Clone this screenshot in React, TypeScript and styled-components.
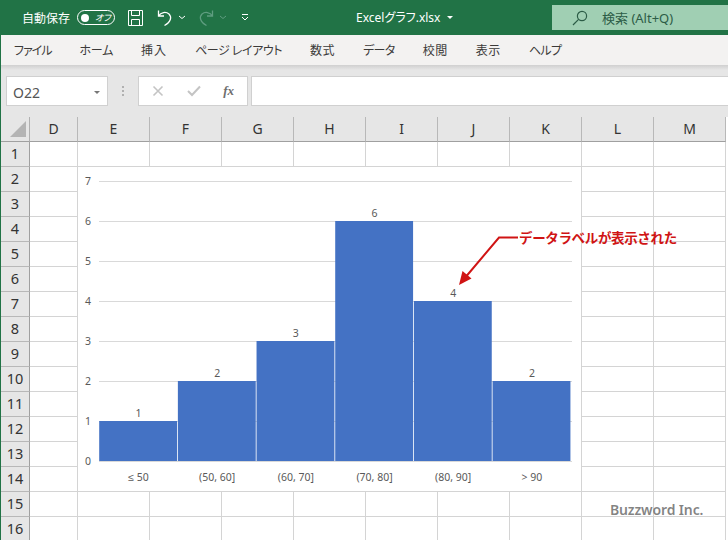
import React from "react";
import styled, { createGlobalStyle } from "styled-components";

const GlobalStyle = createGlobalStyle`
    html, body {
        margin: 0;
        padding: 0;
        background: #ffffff;
    }
`;

const uiFont = `"Noto Sans", "Noto Sans CJK JP", sans-serif`;

const Page = styled.div`
    width: 728px;
    height: 540px;
    overflow: hidden;
    box-sizing: border-box;
    border-left: 1px solid #217346;
    display: flex;
    flex-direction: column;
    font-family: ${uiFont};
    font-feature-settings: "palt";
    background: #e6e6e6;
`;

const TitleBar = styled.div`
    height: 35px;
    flex: none;
    margin-left: -1px;
    background: #217346;
    color: #ffffff;
    display: flex;
    align-items: center;
    font-size: 12px;
    position: relative;
`;

const AutoSave = styled.span`
    margin-left: 22px;
    width: 55px;
    letter-spacing: 0;
`;

const Toggle = styled.div`
    width: 38px;
    height: 15px;
    box-sizing: border-box;
    border: 1px solid #ffffff;
    border-radius: 8px;
    display: flex;
    align-items: center;
    padding-left: 3px;
    font-size: 9px;
    font-style: italic;
    gap: 6px;
    margin-right: 12px;
`;

const ToggleDot = styled.i`
    width: 8px;
    height: 8px;
    border-radius: 50%;
    background: #ffffff;
`;

const QuickIcon = styled.svg<{ $gap?: number }>`
    flex: none;
    margin-right: ${(p) => p.$gap ?? 0}px;
`;

const FileName = styled.div`
    position: absolute;
    left: 356px;
    top: 9px;
    display: flex;
    align-items: center;
    gap: 7px;
    line-height: 17px;
`;

const Caret = styled.i<{ $color: string }>`
    width: 0;
    height: 0;
    border-left: 3px solid transparent;
    border-right: 3px solid transparent;
    border-top: 3px solid ${(p) => p.$color};
`;

const SearchBox = styled.div`
    position: absolute;
    left: 552px;
    top: 5px;
    width: 176px;
    height: 25px;
    background: #a0cfb3;
    color: #2c5c46;
    display: flex;
    align-items: center;
    padding-left: 20px;
    box-sizing: border-box;
    gap: 14px;
    font-size: 13px;
`;

const RibbonTabs = styled.div`
    height: 30px;
    flex: none;
    background: #f3f2f1;
    display: flex;
    align-items: center;
    gap: 28px;
    padding-left: 13px;
    font-size: 12px;
    color: #3b3a39;
`;

const RibbonTab = styled.span<{ $spacing: number }>`
    letter-spacing: ${(p) => p.$spacing}px;
`;

const RibbonShadow = styled.div`
    height: 5px;
    flex: none;
    background: linear-gradient(#d0d0d0, #e6e6e6);
`;

const FormulaBar = styled.div`
    height: 47px;
    flex: none;
    box-sizing: border-box;
    padding: 6px 0 11px 5px;
    display: flex;
    align-items: stretch;
`;

const FieldBox = styled.div`
    background: #ffffff;
    border: 1px solid #d0d0d0;
    box-sizing: border-box;
    display: flex;
    align-items: center;
`;

const NameBox = styled(FieldBox)`
    width: 102px;
    padding: 2px 7px 0 6px;
    justify-content: space-between;
    font-size: 14px;
    color: #555555;
`;

const Grip = styled.div`
    width: 30px;
    display: flex;
    flex-direction: column;
    align-items: center;
    justify-content: center;
    gap: 2px;
`;

const GripDot = styled.i`
    width: 2px;
    height: 2px;
    background: #b0b0b0;
`;

const FormulaButtons = styled(FieldBox)`
    width: 110px;
    margin-right: 3px;
    justify-content: space-between;
    padding: 0 13px 0 13px;
`;

const FxLabel = styled.span`
    font-family: "Liberation Serif", serif;
    font-style: italic;
    font-weight: bold;
    font-size: 13px;
    color: #6e6e6e;
`;

const FormulaInput = styled(FieldBox)`
    flex: 1;
    border-right: none;
`;

const Sheet = styled.div`
    position: relative;
    flex: 1;
    display: grid;
    grid-template-columns: 29px 48px repeat(9, 72px);
    grid-auto-rows: 25px;
    background: #ffffff;
    align-content: start;
`;

const Corner = styled.div`
    background: #e6e6e6;
    border-right: 1px solid #b0b0b0;
    border-bottom: 1px solid #a0a0a0;
    box-sizing: border-box;
    display: flex;
    align-items: flex-end;
    justify-content: flex-end;
    padding: 0 3px 4px 0;
`;

const CornerMark = styled.i`
    width: 0;
    height: 0;
    border-left: 16px solid transparent;
    border-bottom: 16px solid #b4b4b4;
`;

const ColHead = styled.div`
    background: #e6e6e6;
    border-right: 1px solid #b8b8b8;
    border-bottom: 1px solid #a0a0a0;
    box-sizing: border-box;
    display: flex;
    align-items: center;
    justify-content: center;
    padding-bottom: 2px;
    font-size: 14px;
    color: #333333;
`;

const RowHead = styled.div`
    background: #e6e6e6;
    border-right: 1px solid #a0a0a0;
    border-bottom: 1px solid #b8b8b8;
    box-sizing: border-box;
    display: flex;
    align-items: center;
    justify-content: center;
    padding-bottom: 2px;
    font-size: 14.5px;
    color: #333333;
`;

const Cell = styled.div`
    border-right: 1px solid #d4d4d4;
    border-bottom: 1px solid #d4d4d4;
    box-sizing: border-box;
`;

const ChartFrame = styled.svg`
    position: absolute;
    left: 77px;
    top: 50px;
    background: #ffffff;
`;

const ArrowLayer = styled.svg`
    position: absolute;
    left: 449px;
    top: 110px;
`;

const Callout = styled.div`
    position: absolute;
    left: 518px;
    top: 109px;
    font-size: 13.5px;
    font-weight: bold;
    color: #d01414;
    line-height: 22px;
    white-space: nowrap;
    font-feature-settings: normal;
    letter-spacing: -0.35px;
    font-family: "Noto Sans CJK JP", sans-serif;
`;

const Watermark = styled.div`
    position: absolute;
    left: 609px;
    top: 383px;
    font-size: 14px;
    font-weight: 600;
    letter-spacing: -0.15px;
    color: rgba(90, 90, 90, 0.75);
    line-height: 20px;
    white-space: nowrap;
`;

const tabs = [
    { label: "ファイル", spacing: -1 },
    { label: "ホーム", spacing: -0.3 },
    { label: "挿入", spacing: 1 },
    { label: "ページ レイアウト", spacing: -0.45 },
    { label: "数式", spacing: 0.5 },
    { label: "データ", spacing: -0.6 },
    { label: "校閲", spacing: 0.5 },
    { label: "表示", spacing: 0.5 },
    { label: "ヘルプ", spacing: -0.6 },
];
const columns = ["D", "E", "F", "G", "H", "I", "J", "K", "L", "M"];
const rows = Array.from({ length: 16 }, (_, i) => i + 1);

const bars = [
    { label: "≤ 50", value: 1 },
    { label: "(50, 60]", value: 2 },
    { label: "(60, 70]", value: 3 },
    { label: "(70, 80]", value: 6 },
    { label: "(80, 90]", value: 4 },
    { label: "> 90", value: 2 },
];

// chart coordinates are local to the frame, which starts at (78, 167)
const plotLeft = 21.2;
const plotBottom = 294;
const unit = 40;
const barStep = 78.67;

function Histogram() {
    return (
        <ChartFrame width={503} height={324} fontFamily="'Noto Sans', sans-serif" fontSize={10.5} fill="#595959">
            {[0, 1, 2, 3, 4, 5, 6, 7].map((n) => (
                <g key={n}>
                    <line x1={21} x2={494} y1={plotBottom - n * unit + 0.5} y2={plotBottom - n * unit + 0.5} stroke="#d9d9d9" />
                    <text x={10} y={plotBottom - n * unit + 3.5} textAnchor="middle">{n}</text>
                </g>
            ))}
            {bars.map((b, i) => {
                const x = plotLeft + i * barStep;
                return (
                    <g key={b.label}>
                        <rect x={x} y={plotBottom - b.value * unit} width={barStep - 0.8} height={b.value * unit} fill="#4472c4" />
                        <text x={x + barStep / 2} y={plotBottom - b.value * unit - 4} textAnchor="middle">{b.value}</text>
                        <text x={x + barStep / 2} y={314} textAnchor="middle">{b.label}</text>
                    </g>
                );
            })}
        </ChartFrame>
    );
}

export default function App() {
    return (
        <Page>
            <GlobalStyle />
            <TitleBar>
                <AutoSave>自動保存</AutoSave>
                <Toggle>
                    <ToggleDot />
                    <span>オフ</span>
                </Toggle>
                <QuickIcon width="17" height="18" viewBox="0 0 17 18" fill="none" stroke="#fff" $gap={13}>
                    <path d="M1.5 1.5h14v15h-14zM4.5 1.5v5h8v-5M4.5 16.5v-6h8v6" />
                </QuickIcon>
                <QuickIcon width="16" height="18" viewBox="0 0 16 18" fill="none" stroke="#fff" strokeWidth="1.3" $gap={5}>
                    <path d="M1.5 1.5v5.5h5.5M1.5 7C4 3 9 2.5 12 5c3 3 2 8-4.5 11.5" />
                </QuickIcon>
                <QuickIcon width="8" height="5" viewBox="0 0 8 5" fill="none" stroke="#fff" $gap={12}>
                    <path d="M1 1l3 2.5L7 1" />
                </QuickIcon>
                <QuickIcon width="16" height="18" viewBox="0 0 16 18" fill="none" stroke="#5f9d80" strokeWidth="1.3" $gap={5}>
                    <path d="M14.5 1.5v5.5H9M14.5 7C12 3 7 2.5 4 5c-3 3-2 8 4.5 11.5" />
                </QuickIcon>
                <QuickIcon width="8" height="5" viewBox="0 0 8 5" fill="none" stroke="#5f9d80" $gap={14}>
                    <path d="M1 1l3 2.5L7 1" />
                </QuickIcon>
                <QuickIcon width="8" height="7" viewBox="0 0 8 7" fill="none" stroke="#fff">
                    <path d="M1 .5h6M1 3l3 3 3-3" />
                </QuickIcon>
                <FileName>
                    <span>Excelグラフ.xlsx</span>
                    <Caret $color="#ffffff" />
                </FileName>
                <SearchBox>
                    <svg width="16" height="16" viewBox="0 0 16 16" fill="none" stroke="#2c5c46" strokeWidth="1.2">
                        <circle cx="10" cy="6" r="4.6" />
                        <path d="M6.6 9.4L1 15" />
                    </svg>
                    <span>検索 (Alt+Q)</span>
                </SearchBox>
            </TitleBar>
            <RibbonTabs>
                {tabs.map((t) => (
                    <RibbonTab key={t.label} $spacing={t.spacing}>{t.label}</RibbonTab>
                ))}
            </RibbonTabs>
            <RibbonShadow />
            <FormulaBar>
                <NameBox>
                    <span>O22</span>
                    <Caret $color="#777777" />
                </NameBox>
                <Grip>
                    <GripDot />
                    <GripDot />
                    <GripDot />
                </Grip>
                <FormulaButtons>
                    <svg width="12" height="12" viewBox="0 0 12 12" fill="none" stroke="#c4c4c4" strokeWidth="1.6">
                        <path d="M1.5 1.5l9 9M10.5 1.5l-9 9" />
                    </svg>
                    <svg width="14" height="12" viewBox="0 0 14 12" fill="none" stroke="#c4c4c4" strokeWidth="2">
                        <path d="M1 6l4 4 8-8.5" />
                    </svg>
                    <FxLabel>fx</FxLabel>
                </FormulaButtons>
                <FormulaInput />
            </FormulaBar>
            <Sheet>
                <Corner>
                    <CornerMark />
                </Corner>
                {columns.map((c) => (
                    <ColHead key={c}>{c}</ColHead>
                ))}
                {rows.map((r) => (
                    <React.Fragment key={r}>
                        <RowHead>{r}</RowHead>
                        {columns.map((c) => (
                            <Cell key={c} />
                        ))}
                    </React.Fragment>
                ))}
                <Histogram />
                <ArrowLayer width="70" height="60" viewBox="0 0 70 60" fill="none">
                    <path d="M68 10.5H49L14 52" stroke="#d01414" strokeWidth="2" />
                    <path d="M9 58l3.5-14 9 7.5z" fill="#d01414" />
                </ArrowLayer>
                <Callout>データラベルが表示された</Callout>
                <Watermark>Buzzword Inc.</Watermark>
            </Sheet>
        </Page>
    );
}
